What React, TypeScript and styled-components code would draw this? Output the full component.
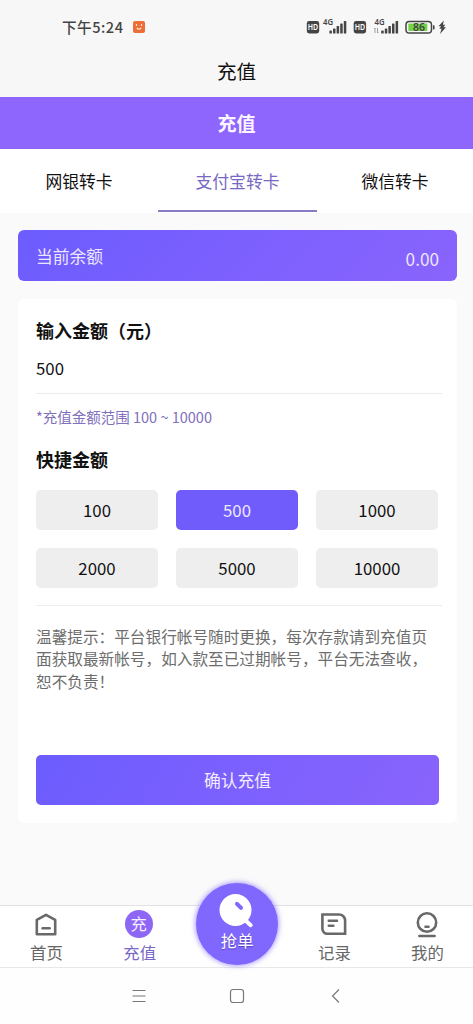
import React from "react";
import styled, { createGlobalStyle } from "styled-components";

const Global = createGlobalStyle`
  * { box-sizing: border-box; }
  body { margin: 0; background: #fafafa; }
  button { font: inherit; border: 0; padding: 0; margin: 0; }
`;

const Screen = styled.div`
  width: 473px;
  height: 1024px;
  display: flex;
  flex-direction: column;
  overflow: hidden;
  background: #fafafa;
  color: #111;
  font-family: "Noto Sans CJK SC", sans-serif;
  font-size: 16.8px;
`;

const StatusBar = styled.div`
  height: 54px;
  flex: none;
  display: flex;
  align-items: center;
  justify-content: space-between;
  padding: 0 25px 0 62px;
  background: #f7f7f7;
  color: #444;
`;

const Clock = styled.div`
  display: flex;
  align-items: center;
  gap: 9px;
  font-size: 14.6px;
  font-weight: 500;
  letter-spacing: 0.5px;
  line-height: 20px;
`;

const PageTitle = styled.div`
  height: 43px;
  flex: none;
  background: #f7f7f7;
  text-align: center;
  font-size: 19.6px;
  line-height: 34px;
`;

const Banner = styled.h1`
  height: 52px;
  flex: none;
  margin: 0;
  background: #8e66fe;
  color: #fcf5ff;
  text-align: center;
  font-size: 19px;
  font-weight: 700;
  line-height: 52px;
`;

const Tabs = styled.div`
  height: 64px;
  flex: none;
  display: grid;
  grid-template-columns: 158px 159px 1fr;
  padding-bottom: 1px;
  background: #fff;
`;

const Tab = styled.button<{ $active?: boolean }>`
  padding-top: 2px;
  background: none;
  color: ${(p) => (p.$active ? "#7768c6" : "#111")};
  border-bottom: 2px solid ${(p) => (p.$active ? "#8a7cc4" : "transparent")};
`;

const Content = styled.main`
  flex: 1;
  display: flex;
  flex-direction: column;
  gap: 18px;
  padding: 17px 16px 0 18px;
`;

const Balance = styled.div`
  height: 51px;
  flex: none;
  display: flex;
  align-items: center;
  justify-content: space-between;
  padding: 0 18px;
  border-radius: 6px;
  background: linear-gradient(135deg, #6c5cfe, #7c60fe 50%, #8964fc);
  color: #eee6ff;
`;

const BalanceValue = styled.span`
  font-size: 17.2px;
  padding-top: 5px;
`;

const Card = styled.section`
  height: 524px;
  flex: none;
  padding: 17px 18px 18px;
  border-radius: 6px;
  background: #fff;
  display: flex;
  flex-direction: column;
`;

const Heading = styled.h2`
  margin: 0;
  font-size: 18px;
  font-weight: 700;
  line-height: 28px;
`;

const AmountField = styled.div`
  height: 50px;
  margin-right: -3px;
  padding-top: 10px;
  line-height: 28px;
  border-bottom: 1px solid #ececec;
`;

const RangeNote = styled.div`
  margin: 10px 0 15px;
  font-size: 14.5px;
  line-height: 26px;
  color: #8170bc;
`;

const Options = styled.div`
  display: grid;
  grid-template-columns: repeat(3, 1fr);
  gap: 18px;
  margin-top: 17px;
  padding: 0 1px 17px 0;
`;

const Option = styled.button<{ $active?: boolean }>`
  height: 40px;
  line-height: 40px;
  border-radius: 5px;
  background: ${(p) => (p.$active ? "#6f5cfb" : "#eeeeef")};
  color: ${(p) => (p.$active ? "#eee8ff" : "#111")};
`;

const Notice = styled.p`
  margin: 0 -3px 0 0;
  padding-top: 20px;
  border-top: 1px solid #ececec;
  font-size: 15.65px;
  line-height: 22.4px;
  color: #6d6d6d;
`;

const Submit = styled.button`
  height: 50px;
  margin-top: auto;
  border-radius: 5px;
  background: linear-gradient(120deg, #6c5cfe, #7a60fe 45%, #8964fc);
  color: #f4ecff;
`;

const BottomNav = styled.nav`
  height: 63px;
  flex: none;
  display: grid;
  grid-template-columns: 93px 93.5px 101.5px 93px 93px;
  background: #fff;
  border-top: 1px solid #e2e2e2;
  border-bottom: 1px solid #e8e8e8;
`;

const NavItem = styled.div<{ $active?: boolean }>`
  display: flex;
  flex-direction: column;
  align-items: center;
  padding-top: 4px;
  font-size: 16.4px;
  line-height: 24px;
  color: ${(p) => (p.$active ? "#7768c6" : "#666")};

  svg { flex: none; margin: 0 2px 2px 0; }
`;

const Coin = styled.div`
  width: 28px;
  height: 28px;
  margin: 0 2px 2px 0;
  border-radius: 50%;
  background: #8e66f6;
  color: #f6edff;
  text-align: center;
  line-height: 27px;
`;

const GrabSlot = styled.div`
  position: relative;
`;

const GrabButton = styled.div`
  position: absolute;
  top: -23px;
  left: 50%;
  margin-left: -41px;
  width: 82px;
  height: 82px;
  border-radius: 50%;
  display: flex;
  flex-direction: column;
  align-items: center;
  padding-top: 11px;
  background: #8067fd;
  box-shadow: 0 0 5px 1px rgba(128, 103, 253, 0.65);
  color: #fff;
  font-size: 16.4px;
  line-height: 24px;
  text-shadow: 0 1px 1px rgba(50, 30, 130, 0.5);

  svg { flex: none; margin-bottom: -2px; }
`;

const SystemBar = styled.div`
  height: 56px;
  flex: none;
  display: flex;
  justify-content: center;
  gap: 78px;
  align-items: center;
  background: #fefefe;
`;

const iconStroke = { fill: "none", stroke: "#696969", strokeWidth: 2.6 } as const;

function StatusIcons() {
  const bars = (x: number) =>
    [3, 5, 7.5, 10, 12.5].map((h, i) => (
      <rect key={i} x={x + i * 3.6} y={18.5 - h} width={2.5} height={h} rx={0.6} />
    ));
  return (
    <svg width="142" height="24" viewBox="0 0 142 24" fill="#444" fontFamily="Noto Sans" fontWeight="600">
      {[0.8, 47.7].map((x) => (
        <g key={x}>
          <rect x={x} y="6" width="12.4" height="12.4" rx="2.4" />
          <text x={x + 6.2} y="15.4" fontSize="8.5" fill="#fff" textAnchor="middle" textLength="10.4" lengthAdjust="spacingAndGlyphs">HD</text>
        </g>
      ))}
      <text x="17" y="10.2" fontSize="8" textLength="10" lengthAdjust="spacingAndGlyphs">4G</text>
      <text x="68.6" y="10.2" fontSize="8" textLength="10" lengthAdjust="spacingAndGlyphs">4G</text>
      {bars(23.4)}
      {bars(75.2)}
      <path d="M69 18v-5l-1 1M71.500 13v5l1-1" fill="none" stroke="#888" strokeWidth="0.8" />
      <rect x="100" y="6.500" width="25.500" height="11.500" rx="3.300" fill="#fafafa" stroke="#444" strokeWidth="1.500" />
      <rect x="102.300" y="8.500" width="19" height="7.500" rx="1" fill="#75d346" />
      <text x="113" y="16" fontSize="10" textAnchor="middle" textLength="12" lengthAdjust="spacingAndGlyphs">86</text>
      <path d="M127 10.200h.6a1 1 0 0 1 1 1v2.200a1 1 0 0 1-1 1h-.6z" />
      <path d="M137.800 5.500l-5.300 5.700h2.600l-1.800 2.500h2.300l-1.600 5.300 6-6.800h-2.600l1.900-2.500h-2.400z" />
    </svg>
  );
}

function HomeIcon() {
  return (
    <svg width="28" height="28" viewBox="0 0 28 28">
      <path d="M4.800 9.900 14 4.900l9.200 5v14.300H4.800z" {...iconStroke} strokeLinejoin="round" />
      <path d="M10.600 18.200h7" {...iconStroke} strokeLinecap="round" />
    </svg>
  );
}

function RecordIcon() {
  return (
    <svg width="28" height="28" viewBox="0 0 28 28">
      <path d="M2.400 4.500h16.700a6 6 0 0 1 6 6v13.300H7.400a5 5 0 0 1-5-5z" {...iconStroke} />
      <path d="M8.800 10.800h8.200M8.800 15.800h4.500" {...iconStroke} strokeLinecap="round" />
    </svg>
  );
}

function ProfileIcon() {
  return (
    <svg width="28" height="28" viewBox="0 0 28 28">
      <circle cx="14" cy="12.500" r="9.200" {...iconStroke} />
      <path d="M12.500 16.800h3M6.400 26h15.200" {...iconStroke} strokeLinecap="round" />
    </svg>
  );
}

function GrabIcon() {
  return (
    <svg width="36" height="36" viewBox="0 0 36 36">
      <circle cx="16.500" cy="16" r="16" fill="#fff" />
      <path d="M25.500 25.500l6.200 5.700" stroke="#fff" strokeWidth="4" strokeLinecap="round" />
      <path d="M18 9.800l4 4" stroke="#8067fd" strokeWidth="4" strokeLinecap="round" />
    </svg>
  );
}

const amounts = [100, 500, 1000, 2000, 5000, 10000];

export default function App() {
  return (
    <Screen>
      <Global />
      <StatusBar>
        <Clock>
          下午5:24
          <svg width="12" height="12" viewBox="0 0 12 12">
            <rect width="12" height="12" rx="2" fill="#ed6d36" />
            <path d="M3.500 3v2M8.500 3v2M3.800 7q2.200 2.400 4.400 0" fill="none" stroke="#ffe8d8" strokeWidth="1.200" />
          </svg>
        </Clock>
        <StatusIcons />
      </StatusBar>
      <PageTitle>充值</PageTitle>
      <Banner>充值</Banner>
      <Tabs>
        <Tab>网银转卡</Tab>
        <Tab $active>支付宝转卡</Tab>
        <Tab>微信转卡</Tab>
      </Tabs>
      <Content>
        <Balance>
          <span>当前余额</span>
          <BalanceValue>0.00</BalanceValue>
        </Balance>
        <Card>
          <Heading>输入金额（元）</Heading>
          <AmountField>500</AmountField>
          <RangeNote>*充值金额范围 100 ~ 10000</RangeNote>
          <Heading>快捷金额</Heading>
          <Options>
            {amounts.map((n) => (
              <Option key={n} $active={n === 500}>{n}</Option>
            ))}
          </Options>
          <Notice>
            温馨提示：平台银行帐号随时更换，每次存款请到充值页面获取最新帐号，如入款至已过期帐号，平台无法查收，恕不负责！
          </Notice>
          <Submit>确认充值</Submit>
        </Card>
      </Content>
      <BottomNav>
        <NavItem><HomeIcon />首页</NavItem>
        <NavItem $active><Coin>充</Coin>充值</NavItem>
        <GrabSlot>
          <GrabButton><GrabIcon />抢单</GrabButton>
        </GrabSlot>
        <NavItem><RecordIcon />记录</NavItem>
        <NavItem><ProfileIcon />我的</NavItem>
      </BottomNav>
      <SystemBar>
        <svg width="20" height="20" viewBox="0 0 20 20" fill="none" stroke="#777" strokeWidth="1.100">
          <path d="M3.500 4.500h13M3.500 10h13M3.500 15.500h13" />
        </svg>
        <svg width="20" height="20" viewBox="0 0 20 20" fill="none" stroke="#777" strokeWidth="1.200">
          <rect x="3.500" y="3.500" width="13" height="13" rx="2.500" />
        </svg>
        <svg width="20" height="20" viewBox="0 0 20 20" fill="none" stroke="#777" strokeWidth="1.200">
          <path d="M14 3.500 7.500 10l6.500 6.500" />
        </svg>
      </SystemBar>
    </Screen>
  );
}
